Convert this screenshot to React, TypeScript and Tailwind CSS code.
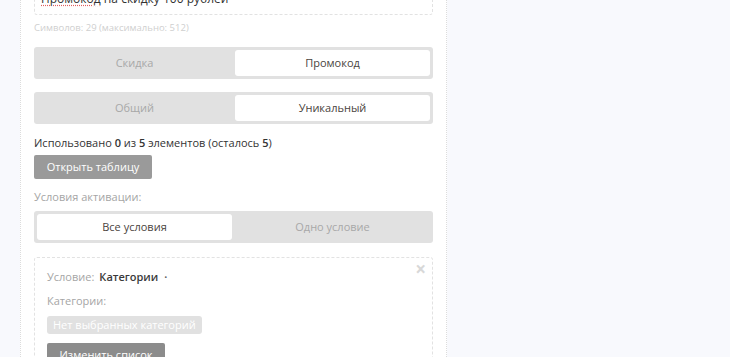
import { useState } from "react";

function Segmented({
  options,
  value,
  onChange,
}: {
  options: string[];
  value: number;
  onChange: (i: number) => void;
}) {
  return (
    <div className="flex h-8 gap-[3px] rounded-[3px] bg-[#e1e1e1] p-[3px]">
      {options.map((opt, i) => (
        <button
          key={opt}
          onClick={() => onChange(i)}
          className={
            i === value
              ? "flex-1 rounded-[3px] bg-white text-[11px] text-[#4a4440]"
              : "flex-1 rounded-[3px] text-[11px] text-[#a8a8a8]"
          }
        >
          {opt}
        </button>
      ))}
    </div>
  );
}

export default function App() {
  const [type, setType] = useState(1);
  const [mode, setMode] = useState(1);
  const [cond, setCond] = useState(0);

  return (
    <div
      className="flex h-[357px] w-full overflow-hidden bg-[#f8f9fd]"
      style={{ fontFamily: "'Open Sans', 'Liberation Sans', sans-serif" }}
    >
      <div className="w-5 shrink-0" />
      <div className="flex w-[427px] shrink-0 flex-col border-x border-dotted border-[#dcdcdc] bg-white px-[13px]">
        <div className="-mt-[17px] flex h-8 shrink-0 items-center rounded-[3px] border border-dashed border-[#e2e2e2] px-[6px] text-[12px] text-[#333]">
          <span>
            <span className="underline decoration-[#e06060] decoration-dotted underline-offset-2">
              Промокод
            </span>{" "}
            на скидку 100 рублей
          </span>
        </div>
        <div className="mt-[6px] shrink-0 text-[9.5px] leading-[14px] text-[#cfcfcf]">
          Символов: 29 (максимально: 512)
        </div>

        <div className="mt-[12px] shrink-0">
          <Segmented options={["Скидка", "Промокод"]} value={type} onChange={setType} />
        </div>
        <div className="mt-[13px] shrink-0">
          <Segmented options={["Общий", "Уникальный"]} value={mode} onChange={setMode} />
        </div>

        <div className="mt-[12px] shrink-0 text-[11px] leading-[14px] text-[#333]">
          Использовано <b className="font-semibold">0</b> из <b className="font-semibold">5</b>{" "}
          элементов (осталось <b className="font-semibold">5</b>)
        </div>
        <button className="mt-[5px] h-6 w-[118px] shrink-0 rounded-[2px] bg-[#9a9a9a] text-[11px] text-white">
          Открыть таблицу
        </button>

        <div className="mt-[11px] shrink-0 text-[11px] leading-[14px] text-[#a5a5a5]">
          Условия активации:
        </div>
        <div className="mt-[7px] shrink-0">
          <Segmented options={["Все условия", "Одно условие"]} value={cond} onChange={setCond} />
        </div>

        <div className="relative mt-[14px] shrink-0 rounded-[3px] border border-dashed border-[#e2e2e2] px-3 pt-[11px] pb-3">
          <span className="absolute right-[6px] top-[1px] text-[19px] font-bold leading-[20px] text-[#d8d8d8]">
            ×
          </span>
          <div className="flex items-center text-[11px] leading-[16px]">
            <span className="text-[#a5a5a5]">Условие:</span>
            <span className="ml-[5px] font-semibold text-[#3a3a3a]">Категории</span>
            <span className="ml-[6px] text-[8px] text-[#666]">•</span>
          </div>
          <div className="mt-[8px] text-[11px] leading-[16px] text-[#a5a5a5]">Категории:</div>
          <div className="mt-[7px] inline-flex h-[18px] items-center rounded-[3px] bg-[#e1e1e1] px-[6px] text-[11px] text-white">
            Нет выбранных категорий
          </div>
          <div>
            <button className="mt-[8px] h-6 w-[118px] rounded-[2px] bg-[#8c8c8c] text-[11px] text-white">
              Изменить список
            </button>
          </div>
        </div>
      </div>
      <div className="flex-1" />
    </div>
  );
}
